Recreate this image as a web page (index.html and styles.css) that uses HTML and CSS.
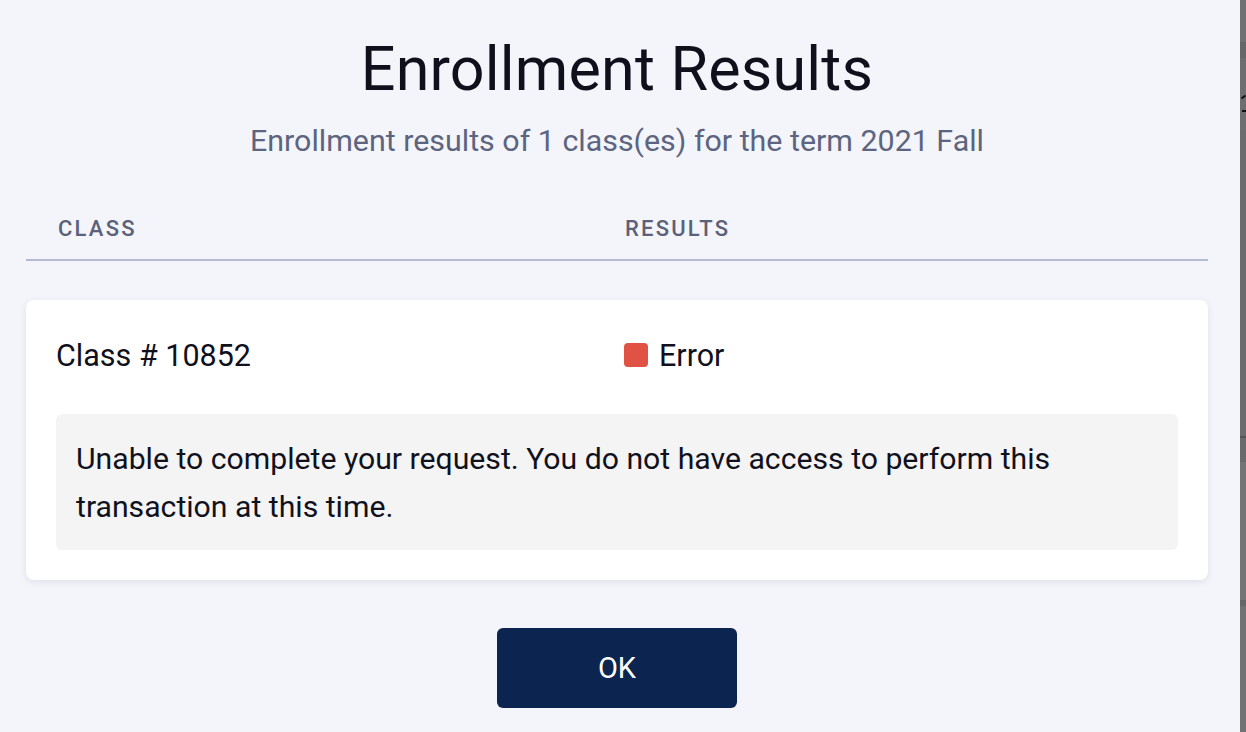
FILE: index.html
```html
<!DOCTYPE html>
<html lang="en">
<head>
<meta charset="utf-8">
<title>Enrollment Results</title>
<link rel="stylesheet" href="styles.css">
</head>
<body>
<div class="screen">
  <main class="modal">
    <h1 class="title">Enrollment Results</h1>
    <p class="subtitle">Enrollment results of 1 class(es) for the term 2021 Fall</p>
    <div class="table-head">
      <span class="th">CLASS</span>
      <span class="th">RESULTS</span>
    </div>
    <section class="card">
      <div class="row">
        <span class="cell">Class # 10852</span>
        <span class="cell status"><span class="dot"></span>Error</span>
      </div>
      <div class="message">Unable to complete your request. You do not have access to perform this transaction at this time.</div>
    </section>
    <div class="actions">
      <button class="ok" type="button">OK</button>
    </div>
  </main>
  <div class="backdrop">
    <div class="bd bd-a"></div>
    <div class="bd bd-b"></div>
    <div class="bd bd-c"><span class="glyph"></span><span class="glyph2"></span></div>
    <div class="bd bd-d"></div>
    <div class="bd bd-line"></div>
    <div class="bd bd-e"></div>
    <div class="bd bd-f"></div>
    <div class="bd bd-g"></div>
    <div class="bd bd-h"></div>
  </div>
</div>
</body>
</html>
```

FILE: styles.css
```css
* { box-sizing: border-box; }
html, body { margin: 0; padding: 0; }
body {
  width: 1246px;
  height: 732px;
  overflow: hidden;
  font-family: Roboto, "Liberation Sans", sans-serif;
  background: #6f6f6f;
}
.screen {
  display: flex;
  width: 1246px;
  height: 732px;
}
.modal {
  width: 1240px;
  height: 732px;
  background: #f4f5fa;
  padding: 30px 32px 0 26px;
  display: flex;
  flex-direction: column;
}
.title {
  margin: 0;
  text-align: center;
  font-size: 61px;
  font-weight: 400;
  line-height: 78px;
  color: #0f101c;
  letter-spacing: 0.2px;
}
.subtitle {
  margin: 16px 0 0;
  text-align: center;
  font-size: 30.4px;
  line-height: 34px;
  color: #5c6480;
}
.table-head {
  margin-top: 56px;
  display: grid;
  grid-template-columns: 567px 1fr;
  padding: 0 32px 15px;
  border-bottom: 2px solid #b6bace;
}
.th {
  font-size: 22px;
  line-height: 30px;
  letter-spacing: 2.2px;
  color: #5b6179;
  font-weight: 500;
}
.card {
  margin-top: 39px;
  background: #fff;
  border-radius: 8px;
  box-shadow: 0 2px 6px rgba(120, 125, 170, 0.18);
  padding: 30px 30px 30px;
}
.row {
  display: grid;
  grid-template-columns: 568px 1fr;
  align-items: center;
  height: 50px;
  margin-bottom: 34px;
}
.cell {
  font-size: 30.5px;
  color: #10111c;
}
.status {
  display: flex;
  align-items: center;
  gap: 11px;
}
.dot {
  width: 24px;
  height: 24px;
  border-radius: 4px;
  background: #e05243;
}
.message {
  background: #f4f4f4;
  border-radius: 6px;
  padding: 21px 20px 19px 20px;
  font-size: 30.2px;
  line-height: 48px;
  color: #10111c;
}
.actions {
  display: flex;
  justify-content: center;
  margin-top: 48px;
}
.ok {
  width: 240px;
  height: 80px;
  border: none;
  border-radius: 6px;
  background: #0b2550;
  color: #fff;
  font-family: Roboto, "Liberation Sans", sans-serif;
  font-size: 29px;
}
.backdrop {
  width: 6px;
  display: flex;
  flex-direction: column;
}
.bd { width: 6px; }
.bd-a { height: 42px; background: #717171; }
.bd-b { height: 16px; background: #676767; }
.bd-c { height: 72px; background: #6e6e6e; position: relative; }
.glyph { position: absolute; left: 1px; top: 38px; width: 5px; height: 2px; background: #111; transform: rotate(-40deg); }
.glyph2 { position: absolute; left: 2px; top: 52px; width: 4px; height: 2px; background: #111; }
.bd-d { height: 306px; background: #6c6c6c; }
.bd-line { height: 2px; background: #555; }
.bd-e { height: 24px; background: #6a6a6a; }
.bd-f { height: 138px; background: #747474; }
.bd-g { height: 6px; background: #666; }
.bd-h { flex: 1; background: #727272; }
```
